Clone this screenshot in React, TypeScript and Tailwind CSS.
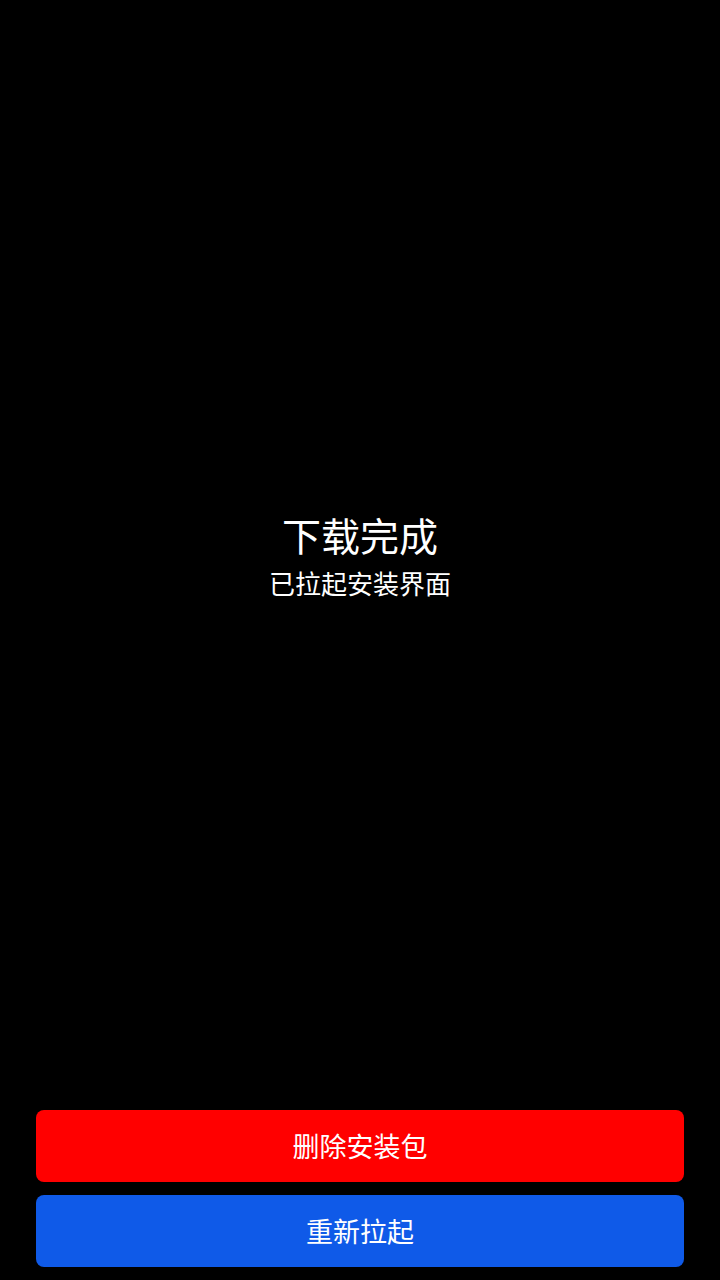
export default function App() {
  return (
    <div
      className="flex flex-col h-[1280px] w-[720px] bg-black text-white"
      style={{ fontFamily: '"Noto Sans CJK SC", "Noto Sans", sans-serif' }}
    >
      {/* Status */}
      <div className="flex-1 flex flex-col items-center justify-center">
        <h1 className="text-[39px] leading-[48px] font-normal">下载完成</h1>
        <p className="mt-2 text-[26px] leading-[34px]">已拉起安装界面</p>
      </div>

      {/* Actions */}
      <div className="flex flex-col gap-[13px] px-9 pb-[13px]">
        <button className="h-[72px] w-full rounded-lg bg-[#ff0000] text-[27px] text-white">
          删除安装包
        </button>
        <button className="h-[72px] w-full rounded-lg bg-[#0f5ae8] text-[27px] text-white">
          重新拉起
        </button>
      </div>
    </div>
  );
}
